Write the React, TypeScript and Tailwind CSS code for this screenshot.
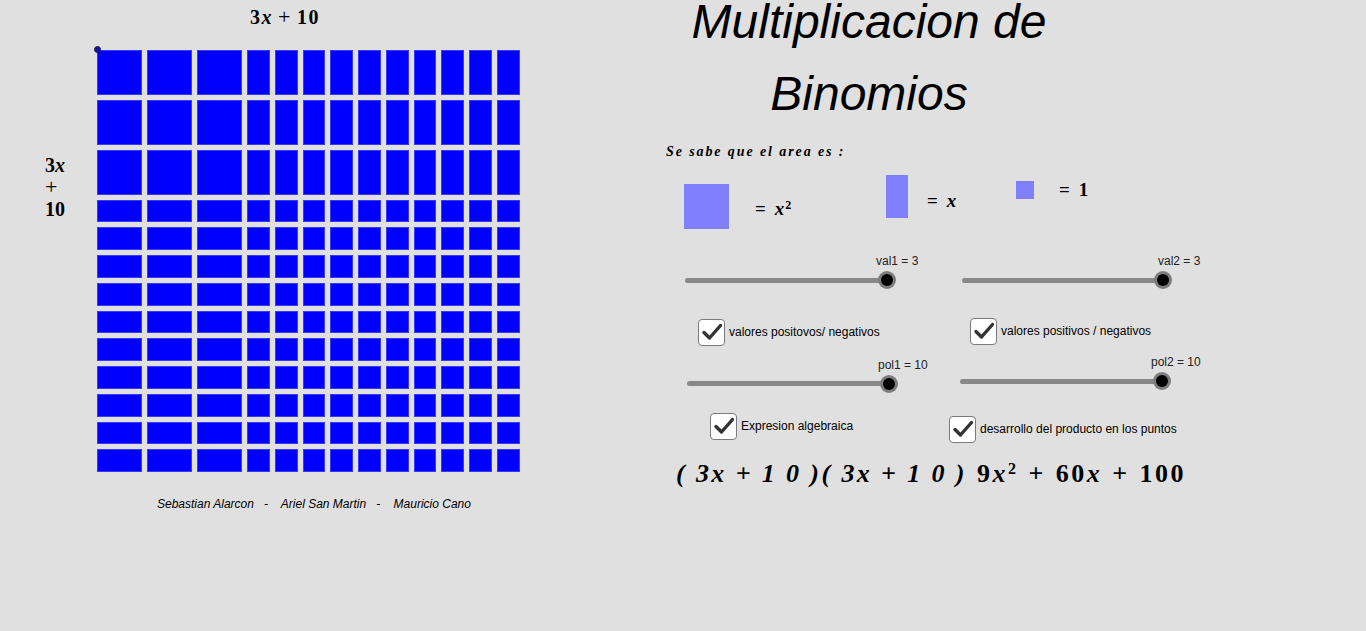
import React from "react";

const SERIF = { fontFamily: '"Liberation Serif", "Times New Roman", serif' };
const SANS = { fontFamily: '"Liberation Sans", Arial, sans-serif' };

function Grid() {
  const cells: React.ReactNode[] = [];
  for (let r = 0; r < 13; r++) {
    for (let c = 0; c < 13; c++) {
      cells.push(
        <div key={r + "-" + c} className="bg-[#0000ff] border border-[#3a3aff]" />
      );
    }
  }
  return (
    <div className="relative grid grid-cols-[45px_45px_45px_repeat(10,22.75px)] grid-rows-[45px_45px_45px_repeat(10,22.75px)] gap-[5px] w-[423px] h-[422.5px]">
      {cells}
      <div className="absolute left-[-3.5px] top-[-3.5px] w-[7px] h-[7px] rounded-full bg-[#1010c0] border border-[#222]" />
    </div>
  );
}

function Slider({ label, width, labelPad }: { label: string; width: number; labelPad: number }) {
  return (
    <div className="flex flex-col" style={SANS}>
      <div className="text-[12px] leading-[16px] text-[#222] whitespace-nowrap" style={{ paddingLeft: labelPad }}>
        {label}
      </div>
      <div className="flex items-center h-[22px]">
        <div className="h-[5px] rounded-full bg-[#888888]" style={{ width }} />
        <div className="-ml-[9px] w-[18px] h-[18px] rounded-full bg-[#7d7d7d] flex items-center justify-center">
          <div className="w-[12px] h-[12px] rounded-full bg-black" />
        </div>
      </div>
    </div>
  );
}

function Check({ label }: { label: string }) {
  return (
    <div className="flex items-center gap-[4px]" style={SANS}>
      <div className="w-[27px] h-[27px] bg-white border-[1.5px] border-[#7b7b7b] rounded-[4px] flex items-center justify-center">
        <svg width="24" height="24" viewBox="0 0 24 24">
          <path d="M4 12.5 L9.5 18 L20.5 5.5" stroke="#333" strokeWidth="3.4" fill="none" strokeLinecap="round" strokeLinejoin="round" />
        </svg>
      </div>
      <span className="text-[12px] leading-[14px] text-black whitespace-nowrap">{label}</span>
    </div>
  );
}

export default function App() {
  return (
    <div className="w-[1366px] h-[631px] bg-[#e0e0e0] flex overflow-hidden text-black">
      {/* Left column */}
      <div className="w-[666px] shrink-0 flex flex-col">
        <div className="pl-[250px] pt-[6.5px] text-[20px] leading-[20px] font-bold tracking-[1.5px]" style={SERIF}>
          3<i>x</i>
          <span className="mx-[5px] font-normal text-[22px]">+</span>10
        </div>
        <div className="flex mt-[23px]">
          <div className="w-[97px] pl-[45px] pt-[104.8px] flex flex-col text-[20px] leading-[22px] font-bold" style={SERIF}>
            <span>
              3<i>x</i>
            </span>
            <span className="font-normal text-[22px]">+</span>
            <span>10</span>
          </div>
          <Grid />
        </div>
        <div className="mt-[26.3px] pl-[157px] text-[12px] leading-[13px] italic whitespace-pre" style={SANS}>
          {"Sebastian Alarcon   -    Ariel San Martin   -    Mauricio Cano"}
        </div>
      </div>

      {/* Right column */}
      <div className="flex-1 flex flex-col">
        <div className="w-[406px] text-center italic text-[48px]" style={SANS}>
          <div className="leading-[44px]">Multiplicacion de</div>
          <div className="mt-[13.9px] leading-[71px]">Binomios</div>
        </div>

        <div className="mt-[15.4px] text-[14px] leading-[16px] font-bold italic tracking-[1.9px] whitespace-pre" style={SERIF}>
          {"Se sabe que el area es :"}
        </div>

        <div className="mt-[15px] flex items-start font-bold text-[19px] leading-[22px]" style={SERIF}>
          <div className="ml-[18px] mt-[9px] w-[202px] flex items-center">
            <div className="w-[45px] h-[45px] bg-[#8080ff]" />
            <span className="ml-[26px] mt-[4px]">
              <span className="mr-[9px]">=</span>
              <i>x</i>
              <sup className="text-[12px] ml-[1px]">2</sup>
            </span>
          </div>
          <div className="w-[130px] flex items-center">
            <div className="w-[22px] h-[43px] bg-[#8080ff]" />
            <span className="ml-[19px] mt-[8px]">
              <span className="mr-[9px]">=</span>
              <i>x</i>
            </span>
          </div>
          <div className="mt-[4px] flex items-center">
            <div className="w-[18px] h-[18px] bg-[#8080ff]" />
            <span className="ml-[25px]">
              <span className="mr-[9px]">=</span>1
            </span>
          </div>
        </div>

        <div className="mt-[24.2px] flex items-start">
          <div className="ml-[19px] w-[211px]">
            <Slider label="val1 = 3" width={202} labelPad={191} />
          </div>
          <div className="ml-[66px]">
            <Slider label="val2 = 3" width={201} labelPad={196} />
          </div>
        </div>

        <div className="mt-[27.5px] flex items-start">
          <div className="ml-[32px] w-[272px]">
            <Check label="valores positovos/ negativos" />
          </div>
          <div className="-mt-[1px]">
            <Check label="valores positivos / negativos" />
          </div>
        </div>

        <div className="mt-[10.8px] flex items-start">
          <div className="ml-[21px] w-[211px]">
            <Slider label="pol1 = 10" width={202} labelPad={191} />
          </div>
          <div className="ml-[62px] -mt-[2.5px]">
            <Slider label="pol2 = 10" width={202} labelPad={191} />
          </div>
        </div>

        <div className="mt-[17.8px] flex items-start">
          <div className="ml-[44px] w-[239px]">
            <Check label="Expresion algebraica" />
          </div>
          <div className="mt-[3px]">
            <Check label="desarrollo del producto en los puntos" />
          </div>
        </div>

        <div className="mt-[16.2px] ml-[10px] flex items-baseline font-bold text-[26px] leading-[30px] whitespace-pre" style={SERIF}>
          <span className="italic tracking-[2.4px]">{"( 3x + 1 0 )( 3x + 1 0 )"}</span>
          <span className="ml-[10px] tracking-[2.5px]">
            9<i>x</i>
            <sup className="text-[16px]">2</sup>
            <span className="mx-[10px]">+</span>60<i>x</i>
            <span className="mx-[10px]">+</span>100
          </span>
        </div>
      </div>
    </div>
  );
}
